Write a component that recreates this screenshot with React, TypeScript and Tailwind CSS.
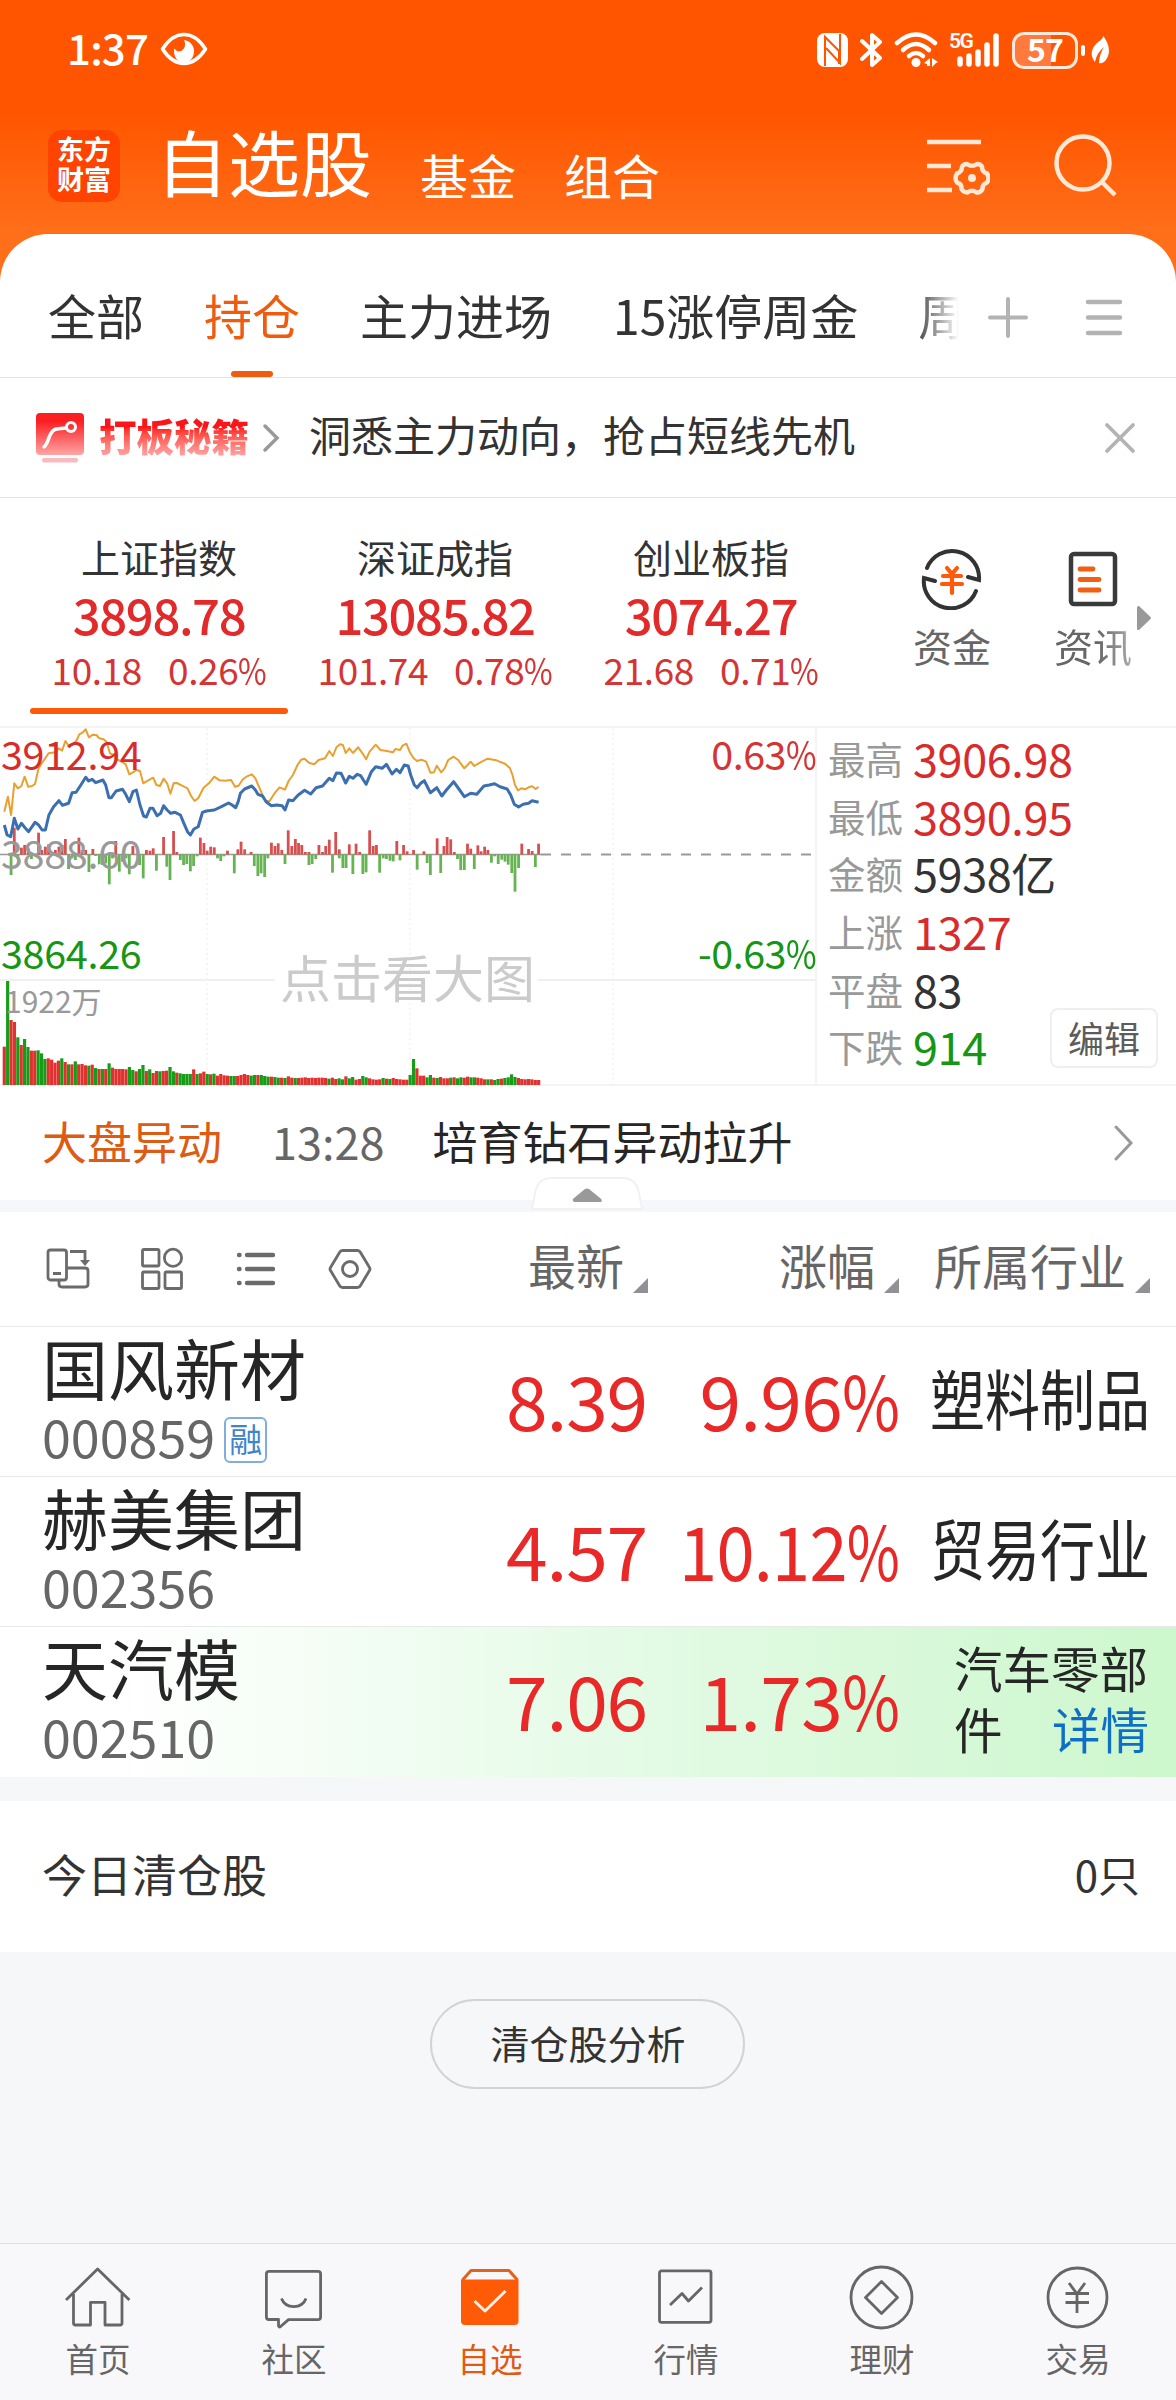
import React from "react";

/* Chart samples are [x, y] pairs on a 1568 x 1140 grid; px/py bring them to screen units. */
const px = (x: number) => x / 2.8;
const py = (y: number) => y / 3 - 13;

const averageLine =
  "12,290 22,245 31,300 40,205 50,220 60,213 69,185 79,215 90,213 98,207 108,160 120,140 136,115 155,112 165,100 174,107 183,78 192,92 205,88 215,75 222,58 232,52 240,43 249,67 260,59 270,60 278,70 290,73 298,80 308,115 318,120 326,132 340,140 352,148 362,178 372,172 382,165 392,168 401,205 415,196 429,188 438,210 448,213 458,191 468,205 477,236 486,205 495,204 510,212 525,220 535,243 545,258 555,250 570,218 585,205 600,185 615,196 630,197 647,195 658,215 668,212 680,193 692,184 705,178 715,190 725,215 735,240 745,258 755,258 770,233 783,217 798,224 808,198 820,180 833,150 843,134 853,131 866,144 880,148 892,135 910,130 922,108 932,123 942,97 952,88 960,90 968,114 978,100 988,114 1003,97 1015,115 1025,133 1035,110 1052,89 1065,105 1083,108 1100,112 1107,102 1120,105 1127,92 1138,86 1147,110 1158,130 1168,138 1180,134 1193,140 1205,173 1215,172 1223,152 1235,172 1245,160 1255,135 1270,125 1283,135 1300,160 1318,140 1328,153 1340,145 1365,131 1390,136 1415,147 1428,160 1435,180 1442,210 1450,226 1460,220 1470,223 1480,217 1490,214 1500,222 1508,215";
const priceLine =
  "12,330 20,360 30,365 40,310 50,342 60,325 70,338 80,350 90,335 98,322 108,330 118,345 127,345 137,300 150,275 165,257 175,271 192,265 202,233 213,232 225,212 240,187 248,198 258,193 268,203 288,195 296,210 305,248 312,248 325,228 343,223 352,238 362,260 372,230 382,225 392,270 402,303 410,306 420,280 428,280 440,302 450,295 458,272 468,285 478,295 490,292 505,300 515,325 525,350 533,360 543,342 555,335 567,292 578,288 600,285 620,275 640,264 650,270 660,278 667,260 673,235 685,222 705,213 715,225 722,238 735,243 745,260 760,272 775,270 790,272 798,285 808,255 820,257 835,240 853,226 870,237 885,218 903,213 922,190 932,197 942,174 955,175 968,204 978,184 988,190 1000,178 1010,182 1025,208 1040,170 1052,155 1070,160 1082,148 1098,177 1110,163 1120,173 1132,150 1143,153 1150,180 1160,210 1168,218 1178,205 1188,197 1205,233 1223,218 1237,243 1250,225 1270,200 1285,222 1300,245 1318,235 1335,238 1355,213 1370,210 1385,206 1400,215 1420,222 1430,240 1440,268 1452,276 1465,268 1480,265 1490,257 1508,262";
const upBars =
  "40,338 60,398 69,390 79,400 108,353 117,405 127,395 136,388 155,405 165,395 174,390 183,372 221,368 230,405 240,405 260,402 324,378 372,393 410,405 420,407 429,400 458,366 486,348 495,411 561,368 571,384 580,407 590,395 600,397 637,407 666,403 675,380 685,403 703,411 760,383 770,393 779,385 789,405 807,346 817,393 827,372 836,384 845,390 855,411 865,411 893,390 903,411 912,393 922,374 940,351 950,403 978,388 997,386 1007,411 1035,346 1045,393 1054,390 1111,378 1130,390 1140,409 1158,405 1187,409 1224,370 1243,393 1252,366 1262,373 1272,411 1309,386 1318,401 1338,391 1347,409 1357,395 1366,405 1461,386 1480,402 1490,408 1508,386";
const downBars =
  "31,480 50,430 88,432 192,462 202,430 211,435 249,471 268,423 278,448 287,450 296,445 306,508 315,430 334,470 343,440 353,430 362,478 391,450 401,490 438,467 467,455 476,495 505,435 514,450 523,447 533,469 542,453 552,424 609,430 618,438 627,424 656,475 712,453 722,483 731,475 741,486 750,430 798,447 865,450 874,447 884,432 931,473 950,430 960,459 969,459 988,477 1016,477 1025,472 1063,473 1073,430 1082,432 1092,437 1101,439 1120,436 1168,464 1196,444 1205,480 1234,474 1281,432 1290,465 1300,465 1328,462 1376,443 1385,424 1395,447 1405,434 1414,440 1423,449 1433,474 1442,530 1452,459 1499,456";
const volumes = [
  115, 312, 195, 189, 143, 120, 138, 114, 103, 103, 104, 95, 78, 80, 76, 67, 73, 80, 69, 62, 62, 71, 62, 63, 59, 58,
  61, 51, 48, 48, 48, 65, 52, 48, 48, 48, 47, 54, 45, 41, 48, 60, 42, 47, 36, 42, 41, 42, 43, 54, 41, 37, 35, 33, 33,
  33, 47, 33, 35, 40, 33, 32, 34, 28, 33, 29, 28, 27, 27, 27, 30, 33, 30, 28, 30, 30, 30, 27, 25, 25, 24, 22, 22, 21,
  26, 22, 21, 21, 22, 23, 21, 22, 21, 22, 22, 21, 19, 22, 18, 20, 17, 26, 20, 24, 16, 18, 27, 23, 20, 17, 16, 17, 21,
  19, 18, 21, 18, 17, 16, 16, 30, 78, 50, 28, 28, 23, 30, 22, 21, 24, 20, 20, 22, 23, 20, 23, 22, 25, 23, 23, 22, 20,
  17, 17, 17, 15, 18, 19, 21, 23, 32, 24, 21, 18, 17, 18, 17, 15, 15,
];
const volumeColors =
  "rgrrgrggrrgggrrrrgrgrgrrrgrgrgrgrrrrrggrggrgrrgrrggrggggrgrrgrgrrrrggrrrrggrgggrggrgrrgrrrrrrrrrgrrggrggrrggrrrrgrgrrrrrggrrrggrgrrrgrggrrggrrrgrggrggggrrrrrr";

const pairs = (s: string) => s.split(" ").map((p) => p.split(",").map(Number));
const toPoints = (s: string) =>
  pairs(s)
    .map(([x, y]) => `${px(x).toFixed(1)},${py(y).toFixed(1)}`)
    .join(" ");

/* A percentage with a slightly condensed percent sign. */
function Percent({ value }: { value: string }) {
  return (
    <>
      {value}
      <span className="-mr-[0.15em] inline-block origin-left scale-x-[0.84]">%</span>
    </>
  );
}

function StatusBar() {
  return (
    <div className="flex h-[100px] items-center justify-between pr-[66px] pl-[67px]">
      <div className="flex items-center gap-[12px]">
        <span className="-mt-[6px] text-[42px] leading-none font-medium tracking-[-0.800px]">1:37</span>
        <svg width="48" height="34" viewBox="0 0 48 34" className="-mt-[2px]">
          <path d="M2.500 17C9 7 16 2.500 24 2.500S39 7 45.500 17C39 27 32 31.500 24 31.500S9 27 2.500 17Z" fill="none" stroke="#fff" strokeWidth="3.600" strokeLinejoin="round" />
          <path d="M24 8c6 1 10 5 10 11s-4 12-10 12-10-6-10-12c0-1 0-2 .6-2.600 1.500 2.800 4 3.600 6.500 2.600 4-2 5-7 2.900-11Z" fill="#fff" />
        </svg>
      </div>
      <div className="flex items-center">
        <svg width="31" height="34" viewBox="0 0 31 34">
          <rect width="31" height="34" rx="8" fill="#fff" />
          <path d="M8 33V4L22 18V31M23 1V30L9 15" fill="none" stroke="#ff5500" strokeWidth="2" />
        </svg>
        <svg width="24" height="36" viewBox="0 0 24 36" className="ml-[12px]">
          <path d="M2 9l18 17-8 7V3l8 7L2 27" fill="none" stroke="#fff" strokeWidth="4" strokeLinecap="round" strokeLinejoin="round" />
        </svg>
        <svg width="46" height="36" viewBox="0 0 46 36" className="ml-[10px]">
          <g fill="none" stroke="#fff" strokeWidth="4.500" strokeLinecap="round">
            <path d="M3 11Q22-6 41 11" />
            <path d="M9 18Q22 6 35 18" />
            <path d="M15 24Q22 18 29 24" />
          </g>
          <circle cx="22" cy="30.500" r="4.500" fill="#fff" />
          <path d="M30 31l6-5v8h-3v-2zM38 26l6 4-2 1-4 4z" fill="#fff" />
        </svg>
        <div className="relative ml-[9px] h-[36px] w-[54px]">
          <span className="absolute top-0 left-0 font-['Roboto',sans-serif] text-[21px] leading-[19px] font-semibold tracking-[-1.500px]">5G</span>
          <svg width="54" height="36" viewBox="0 0 54 36" className="absolute inset-0">
            <g stroke="#fff" strokeWidth="5.500" strokeLinecap="round">
              <path d="M11 27v5M20 24v8M29 20v12M38 13v19M47 4v28" />
            </g>
          </svg>
        </div>
        <div className="relative ml-[9px] flex h-[37px] w-[66px] items-center justify-center rounded-[12px] border-[3px] border-[#ffe9db] bg-[linear-gradient(90deg,#ff7a3c_60%,#ff5500_60%)]">
          <span className="-mt-[5px] text-[32px] leading-none font-bold tracking-[-0.800px]">57</span>
        </div>
        <div className="ml-[3px] h-[11px] w-[4px] rounded-full bg-white" />
        <svg width="19" height="30" viewBox="0 0 19 30" className="ml-[6px]">
          <path d="M12.500 1C17 8 19.500 14 17 21c-2 5-5 8-9 7 0-6 2-11 5-16-5 4-8 9-9 15C-1 21 0 14 5 9c3-3 6-4 7.500-8Z" fill="#fff" />
        </svg>
      </div>
    </div>
  );
}

function TopBar() {
  return (
    <div className="flex h-[134px] items-start pl-[48px]">
      <div className="mt-[30px] flex h-[72px] w-[72px] flex-col items-center justify-center rounded-[14px] bg-[#ff4300] pb-[4px] text-[27px] leading-[30px] font-bold">
        <span>东方</span>
        <span>财富</span>
      </div>
      <div className="mt-[20px] ml-[36px] text-[72px] leading-[80px]">自选股</div>
      <div className="mt-[44px] ml-[48px] text-[48px] leading-[60px]">基金</div>
      <div className="mt-[44px] ml-[48px] text-[48px] leading-[60px]">组合</div>
      <svg width="64" height="62" viewBox="0 0 64 62" className="mt-[36px] ml-auto">
        <g fill="none" stroke="#ffe8d6" strokeWidth="4.500">
          <path d="M1 6h54M1 30h24M1 54h25" />
          <path
            d="M41 27.500q5 3.500 10 0q4 0 5 3q0 5 5 6.500q3 5 0 9q-5 2-4.500 6.500q-2 4-6 3.500q-4.500-3.500-9 0q-4 0-6-3.500q.5-5-4.500-6.500q-3-4 0-9q5-1.500 5-6.500q1-3 5-3Z"
            transform="translate(0 0.500)"
            strokeLinejoin="round"
          />
        </g>
        <circle cx="46" cy="42" r="4" fill="#ffe8d6" />
      </svg>
      <svg width="66" height="66" viewBox="0 0 66 66" className="mt-[33px] mr-[57px] ml-[63px]">
        <g fill="none" stroke="#ffe8d6" strokeWidth="4.500">
          <circle cx="30" cy="30" r="26.500" />
          <path d="M49 49l13 13" />
        </g>
      </svg>
    </div>
  );
}

function Tabs() {
  return (
    <div className="flex h-[144px] items-stretch border-b border-[#e4e4e4] pl-[48px] text-[48px] leading-[60px]">
      <div className="flex w-[911px] gap-[60px] overflow-hidden pt-[50px] whitespace-nowrap [mask-image:linear-gradient(90deg,#000_865px,transparent_911px)]">
        <span>全部</span>
        <div className="flex flex-col items-center justify-between text-[#ef5c0f]">
          <span>持仓</span>
          <span className="h-[6px] w-[42px] rounded-full bg-[#ef5c0f]" />
        </div>
        <span>主力进场</span>
        <span className="ml-px">15涨停周金</span>
        <span>周</span>
      </div>
      <svg width="40" height="42" viewBox="0 0 40 42" className="mt-[63px] ml-[29px]">
        <path d="M2 20.500h36M20 2v37" stroke="#b3b3b3" strokeWidth="4" strokeLinecap="round" />
      </svg>
      <svg width="38" height="42" viewBox="0 0 38 42" className="mt-[63px] ml-[57px]">
        <path d="M3 5h32M3 20.500h32M3 36h32" stroke="#b3b3b3" strokeWidth="4.500" strokeLinecap="round" />
      </svg>
    </div>
  );
}

function Promo() {
  return (
    <div className="flex h-[120px] items-center border-b border-[#e4e4e4] pl-[36px]">
      <svg width="48" height="50" viewBox="0 0 48 50">
        <defs>
          <linearGradient id="promo" x1="0" y1="0" x2="0" y2="1">
            <stop offset="0.200" stopColor="#fb1f22" />
            <stop offset="1" stopColor="#ffa5a5" />
          </linearGradient>
        </defs>
        <rect width="48" height="42" rx="4" fill="url(#promo)" />
        <rect x="6" y="45" width="36" height="4.500" rx="2" fill="#f8bcbf" />
        <path d="M8 34c5-4 4-13 10-17 3-2 8-1 12-2" fill="none" stroke="#fff" strokeWidth="3.500" strokeLinecap="round" />
        <circle cx="35" cy="14" r="4.500" fill="none" stroke="#fff" strokeWidth="3" />
      </svg>
      <span className="-mt-[5px] ml-[15px] bg-gradient-to-b from-[#fb1418] from-35% to-[#ff9a9a] to-85% bg-clip-text text-[37.500px] leading-[52px] font-black text-transparent">打板秘籍</span>
      <svg width="18" height="30" viewBox="0 0 18 30" className="ml-[13px]">
        <path d="M3 3l12 12L3 27" fill="none" stroke="#999" strokeWidth="3.500" strokeLinecap="round" />
      </svg>
      <span className="-mt-[7px] ml-[29px] text-[42px] leading-[60px]">洞悉主力动向，抢占短线先机</span>
      <svg width="32" height="32" viewBox="0 0 32 32" className="mr-[40px] ml-auto">
        <path d="M3 3l26 26M29 3L3 29" stroke="#b3b3b3" strokeWidth="3.800" strokeLinecap="round" />
      </svg>
    </div>
  );
}

const indices = [
  { name: "上证指数", value: "3898.78", diff: "10.18", pct: "0.26", active: true },
  { name: "深证成指", value: "13085.82", diff: "101.74", pct: "0.78", active: false },
  { name: "创业板指", value: "3074.27", diff: "21.68", pct: "0.71", active: false },
];

function Indices() {
  return (
    <div className="flex h-[230px] border-b-2 border-[#f4f4f4] pl-[30px]">
      <div className="flex gap-[18px]">
        {indices.map((it) => (
          <div key={it.name} className="flex w-[258px] flex-col items-center pt-[30px]">
            <div className="text-[39px] leading-[56px]">{it.name}</div>
            <div className="text-[49px] leading-[60px] font-medium tracking-[-1.400px] text-[#e22a2a]">{it.value}</div>
            <div className="mt-[1px] flex gap-[26px] text-[37px] leading-[48px] tracking-[-0.400px] text-[#d43434]">
              <span>{it.diff}</span>
              <span><Percent value={it.pct} /></span>
            </div>
            {it.active && <div className="mt-[15px] h-[6px] w-full rounded-full bg-[#fc5a08]" />}
          </div>
        ))}
      </div>
      <div className="ml-[73px] flex flex-col items-center pt-[50px] text-[39px] leading-[56px] text-[#666]">
        <svg width="62" height="62" viewBox="0 0 62 62">
          <g fill="none" stroke="#333" strokeWidth="4" strokeLinecap="round">
            <path d="M6 20A27 27 0 0 1 58 32l-11-3" />
            <path d="M55 43A27 27 0 0 1 3 30l11 3" />
          </g>
          <path d="M26 20l5 6 5-6M22 28h18M21 36h20M31 27v18" fill="none" stroke="#ff5a0a" strokeWidth="4.200" strokeLinecap="round" />
        </svg>
        <div className="mt-[7px]">资金</div>
      </div>
      <div className="ml-[63px] flex flex-col items-center pt-[50px] text-[39px] leading-[56px] text-[#666]">
        <svg width="62" height="62" viewBox="0 0 62 62">
          <rect x="9" y="6" width="44" height="50" rx="3" fill="none" stroke="#3a3a3a" strokeWidth="4.500" />
          <path d="M18 21h13M18 31.500h19M18 42h19" stroke="#f05f14" strokeWidth="4.800" strokeLinecap="round" />
        </svg>
        <div className="mt-[7px] [mask-image:linear-gradient(90deg,#000_55%,rgba(0,0,0,0.550))]">资讯</div>
      </div>
      <svg width="16" height="26" viewBox="0 0 16 26" className="mt-[107px] ml-[4px]">
        <path d="M1 2.500q0-2 2-1.500L14.500 12q1 1 0 2L3 25q-2 .5-2-1.500Z" fill="#999" />
      </svg>
    </div>
  );
}

function Chart() {
  return (
    <div className="relative h-[356px] w-[817px] shrink-0 border-r-2 border-[#f4f4f4] text-[39.500px] leading-[50px]">
      <svg width="816" height="357" viewBox="0 0 816 357" className="absolute inset-0">
        <path d="M207 0V358M410 0V358M613 0V358" stroke="#ececec" strokeDasharray="2 3" />
        <path d="M0 252H275M538 252H816" stroke="#f0f0f0" strokeWidth="2" />
        <path d="M0 126.500H541" stroke="#999" strokeWidth="1.500" />
        <path d="M541 126.500H816" stroke="#999" strokeWidth="2" strokeDasharray="10 10" />
        {pairs(upBars).map(([x, y]) => (
          <rect key={x} x={px(x) - 1.4} y={py(y)} width="2.800" height={126.5 - py(y)} fill="#d75050" />
        ))}
        {pairs(downBars).map(([x, y]) => (
          <rect key={x} x={px(x) - 1.4} y={126.5} width="2.800" height={py(y) - 126.5} fill="#66b352" />
        ))}
        {volumes.slice(0, 159).map((v, i) => (
          <rect key={i} x={px(12 + 9.47 * i) - 1.6} y={357 - v / 3} width="3.200" height={v / 3} fill={volumeColors[i] === "g" ? "#169c16" : "#e0312f"} />
        ))}
        <polyline points={toPoints(averageLine)} fill="none" stroke="#e9a02f" strokeWidth="2" strokeLinejoin="round" />
        <polyline points={toPoints(priceLine)} fill="none" stroke="#3b6fb0" strokeWidth="3" strokeLinejoin="round" />
      </svg>
      <span className="absolute top-0 left-px tracking-[-0.300px] text-[#d82c2c]">3912.94</span>
      <span className="absolute top-[99px] left-px tracking-[-0.300px] text-[#999]">3888.60</span>
      <span className="absolute top-[199px] left-px tracking-[-0.300px] text-[#159615]">3864.26</span>
      <span className="absolute top-[247px] left-[5px] text-[30px] text-[#999]">1922万</span>
      <span className="absolute top-0 -right-px tracking-[-0.500px] text-[#d43434]"><Percent value="0.63" /></span>
      <span className="absolute top-[199px] -right-px tracking-[-0.500px] text-[#159615]"><Percent value="-0.63" /></span>
      <span className="absolute top-[219px] left-[280px] text-[51px] leading-[58px] text-[#cbcbcb]">点击看大图</span>
    </div>
  );
}

const stats = [
  { label: "最高", value: "3906.98", color: "text-[#d82c2c]" },
  { label: "最低", value: "3890.95", color: "text-[#d82c2c]" },
  { label: "金额", value: "5938亿", color: "text-[#333]" },
  { label: "上涨", value: "1327", color: "text-[#d82c2c]" },
  { label: "平盘", value: "83", color: "text-[#333]" },
  { label: "下跌", value: "914", color: "text-[#159615]" },
];

function Market() {
  return (
    <div className="flex h-[358px] border-b-2 border-[#f4f4f4]">
      <Chart />
      <div className="relative flex-1 pt-px pl-[11px]">
        {stats.map((s) => (
          <div key={s.label} className="flex h-[57.600px] items-center gap-[10px] leading-[57px]">
            <span className="text-[37.500px] text-[#999]">{s.label}</span>
            <span className={`text-[45px] tracking-[-0.400px] ${s.color}`}>{s.value}</span>
          </div>
        ))}
        <div className="absolute right-[18px] bottom-[16px] flex h-[60px] w-[108px] items-center justify-center rounded-[8px] border-2 border-[#efefef] bg-white pb-[3px] text-[36px] leading-[50px] text-[#5c5c5c]">
          编辑
        </div>
      </div>
    </div>
  );
}

function Movement() {
  return (
    <div className="relative flex h-[126px] items-center border-b-[12px] border-[#f6f7fa] pl-[42px] text-[45px] leading-[60px]">
      <span className="-mt-[4px] text-[#dd5b12]">大盘异动</span>
      <span className="-mt-[4px] ml-[50px] text-[#666]">13:28</span>
      <span className="-mt-[4px] ml-[48px] text-[#262626]">培育钻石异动拉升</span>
      <svg width="22" height="36" viewBox="0 0 22 36" className="mr-[41px] ml-auto">
        <path d="M3 2l15 16L3 34" fill="none" stroke="#999" strokeWidth="3" strokeLinecap="round" />
      </svg>
      <svg width="112" height="34" viewBox="0 0 112 34" className="absolute -bottom-[11px] left-[531px]">
        <path d="M1 32l3-16Q7 1 20 1h72q13 0 16 15l3 16Z" fill="#fff" stroke="#f1f1f3" strokeWidth="2" />
        <path d="M42 24q-1-2 1-3L54 12q2-1 4 0l11 9q3 2 1 4H43Z" fill="#999" />
      </svg>
    </div>
  );
}

function SortMark() {
  return (
    <svg width="15" height="15" viewBox="0 0 15 15" className="mt-[42px] ml-[9px]">
      <path d="M15 0V15H0Z" fill="#909095" />
    </svg>
  );
}

function TableHead() {
  return (
    <div className="flex h-[115px] items-center border-b border-[#e9e9e9] pl-[45px] text-[48px] leading-[60px] text-[#666]">
      <svg width="46" height="46" viewBox="0 0 46 46" fill="none" stroke="#6b6b6b" strokeWidth="2.800">
        <rect x="3" y="4" width="18.500" height="30" rx="2.500" />
        <path d="M14 34v4q0 3 3 3h23q3 0 3-3V25q0-3-3-3H22M8 27.500h8M25 5.500h15v12" />
        <path d="M35 14h10l-5 6z" fill="#6b6b6b" stroke="none" />
      </svg>
      <svg width="46" height="46" viewBox="0 0 46 46" fill="none" stroke="#6b6b6b" strokeWidth="2.800" className="ml-[48px]">
        <rect x="3.500" y="3.500" width="16.500" height="16.500" rx="1.500" />
        <circle cx="34" cy="11.800" r="8.600" />
        <rect x="3.500" y="26" width="16.500" height="16.500" rx="1.500" />
        <rect x="26" y="26" width="16.500" height="16.500" rx="1.500" />
      </svg>
      <svg width="46" height="46" viewBox="0 0 46 46" fill="none" stroke="#6b6b6b" strokeWidth="4.400" strokeLinecap="round" className="ml-[48px]">
        <path d="M14 9h26M14 23h26M14 37h26M6 9h.5M6 23h.5M6 37h.5" />
      </svg>
      <svg width="46" height="46" viewBox="0 0 46 46" fill="none" stroke="#6b6b6b" strokeWidth="2.800" strokeLinejoin="round" className="ml-[48px]">
        <path d="M12.500 6.500q1-2 3-2h15q2 0 3 2l9 15q1 1.500 0 3l-9 15q-1 2-3 2h-15q-2 0-3-2l-9-15q-1-1.500 0-3Z" />
        <circle cx="23" cy="23" r="7.500" />
      </svg>
      <div className="-mt-[10px] ml-[155px] flex items-center">
        <span>最新</span>
        <SortMark />
      </div>
      <div className="-mt-[10px] ml-[131px] flex items-center">
        <span>涨幅</span>
        <SortMark />
      </div>
      <div className="-mt-[10px] ml-[35px] flex items-center">
        <span>所属行业</span>
        <SortMark />
      </div>
    </div>
  );
}

const stocks = [
  { name: "国风新材", code: "000859", margin: true, price: "8.39", change: "9.96", squeeze: "", industry: "塑料制品", row: "border-b border-[#e9e9e9]" },
  { name: "赫美集团", code: "002356", margin: false, price: "4.57", change: "10.12", squeeze: "origin-right scale-x-[0.915]", industry: "贸易行业", row: "border-b border-[#e9e9e9]" },
  { name: "天汽模", code: "002510", margin: false, price: "7.06", change: "1.73", squeeze: "", industry: "", row: "bg-gradient-to-r from-white from-10% via-[#e0fae2] via-60% to-[#cdf7cd]" },
];

function StockRows() {
  return (
    <>
      {stocks.map((s) => (
        <div key={s.code} className={`flex h-[150px] items-center pl-[42px] ${s.row}`}>
          <div className="w-[300px] self-start text-[#262626]">
            <div className="h-[79px] text-[66px] leading-[79px]">{s.name}</div>
            <div className="flex h-[60px] items-center gap-[9px]">
              <span className="text-[52px] leading-[60px] text-[#666]">{s.code}</span>
              {s.margin && (
                <span className="mt-[7px] flex h-[46px] w-[43px] items-center justify-center rounded-[6px] border-2 border-[#7faedd] pb-[3px] text-[33px] leading-[40px] text-[#3f85cc]">融</span>
              )}
            </div>
          </div>
          <div className="-mt-[6px] w-[305px] text-right text-[75px] leading-[90px] tracking-[-1.200px] text-[#e92828]">{s.price}</div>
          <div className={`-mt-[6px] w-[252px] text-right text-[75px] leading-[90px] tracking-[-0.800px] whitespace-nowrap text-[#e92828] ${s.squeeze}`}>
            <Percent value={s.change} />
          </div>
          {s.industry ? (
            <div className="-mt-[10px] ml-[31px] w-[220px] text-[#262626]">
              <div className="w-[262px] origin-left scale-x-[0.84] text-[65.500px] leading-[90px] whitespace-nowrap">{s.industry}</div>
            </div>
          ) : (
            <div className="-mt-[9px] ml-[55px] w-[195px] text-[48.500px] leading-[61px] text-[#262626]">
              <div>汽车零部</div>
              <div className="flex justify-between">
                <span>件</span>
                <span className="text-[#0f6fc6]">详情</span>
              </div>
            </div>
          )}
        </div>
      ))}
    </>
  );
}

function HomeIcon() {
  return <path d="M4 38L35.600 7l31.800 31M11.500 32v29q0 2 2 2H28.500V40.300H43V63H58q2 0 2-2V32" />;
}
function ChatIcon() {
  return <path d="M20.500 57.500H11q-2.600 0-2.600-2.600V12q0-2.600 2.600-2.600H60q2.600 0 2.600 2.600V55q0 2.600-2.600 2.600H30.500L22 65Q20.500 65 20.500 63ZM23.500 36.500c4 10.700 20.500 10.700 24.500 0" />;
}
function WatchIcon() {
  return (
    <>
      <path d="M8.500 18L17 8.500H55L63.500 18" stroke="#e0621e" strokeWidth="3" />
      <path d="M7 17.500H64.500V59q0 4-4 4H11q-4 0-4-4Z" fill="#ff5a05" stroke="none" />
      <path d="M20.500 39L31 49 51.500 29" stroke="#fff0e4" strokeWidth="3" />
    </>
  );
}
function QuoteIcon() {
  return (
    <>
      <rect x="9.500" y="8.800" width="51.500" height="51.500" rx="2" />
      <path d="M20 43L32 31.500 38.500 39 52 25.500" />
    </>
  );
}
function FinanceIcon() {
  return (
    <>
      <circle cx="35.500" cy="35.500" r="30.500" />
      <path d="M35.500 19.500L51.500 35.500 35.500 51.500 19.500 35.500Z" />
    </>
  );
}
function TradeIcon() {
  return (
    <>
      <circle cx="35.500" cy="35.500" r="29.500" />
      <path d="M27 21l8 11 8-11M23.500 31.500H47M23.500 40.500H47M35 31v20" />
    </>
  );
}

const navItems = [
  { label: "首页", icon: <HomeIcon />, color: "text-[#666]" },
  { label: "社区", icon: <ChatIcon />, color: "text-[#666]" },
  { label: "自选", icon: <WatchIcon />, color: "text-[#e05a14]" },
  { label: "行情", icon: <QuoteIcon />, color: "text-[#666]" },
  { label: "理财", icon: <FinanceIcon />, color: "text-[#666]" },
  { label: "交易", icon: <TradeIcon />, color: "text-[#666]" },
];

function BottomNav() {
  return (
    <nav className="mt-auto flex h-[157px] border-t border-[#dfe0e3] bg-[#f8f8fa]">
      {navItems.map((n) => (
        <div key={n.label} className="flex w-[196px] flex-col items-center pt-[18px]">
          <svg width="72" height="72" viewBox="0 0 72 72" fill="none" stroke="#666" strokeWidth="2.800" strokeLinejoin="round">
            {n.icon}
          </svg>
          <span className={`text-[32.500px] leading-[48px] ${n.color}`}>{n.label}</span>
        </div>
      ))}
    </nav>
  );
}

export default function App() {
  return (
    <div className="flex h-[2400px] w-[1176px] flex-col overflow-hidden bg-[#f6f7f9] font-['Noto_Sans_CJK_SC',sans-serif] text-[#333]">
      <div className="bg-[linear-gradient(180deg,#ff5500_0,#ff5500_110px,#ff6f1a_234px)]">
        <header className="h-[234px] text-white">
          <StatusBar />
          <TopBar />
        </header>
        <div className="rounded-t-[48px] bg-white">
          <Tabs />
          <Promo />
          <Indices />
        </div>
      </div>
      <div className="bg-white">
        <Market />
        <Movement />
        <TableHead />
        <StockRows />
      </div>
      <div className="mt-[24px] flex h-[151px] items-center justify-between bg-white pr-[36px] pb-[6px] pl-[42px] leading-[60px]">
        <span className="text-[45px]">今日清仓股</span>
        <span className="text-[42px]">0只</span>
      </div>
      <div className="mt-[47px] mr-[2px] flex h-[90px] w-[315px] items-center justify-center self-center rounded-full border-2 border-[#d2d3d6] pb-[5px] pl-[2px] text-[39px] leading-[60px]">清仓股分析</div>
      <BottomNav />
    </div>
  );
}
